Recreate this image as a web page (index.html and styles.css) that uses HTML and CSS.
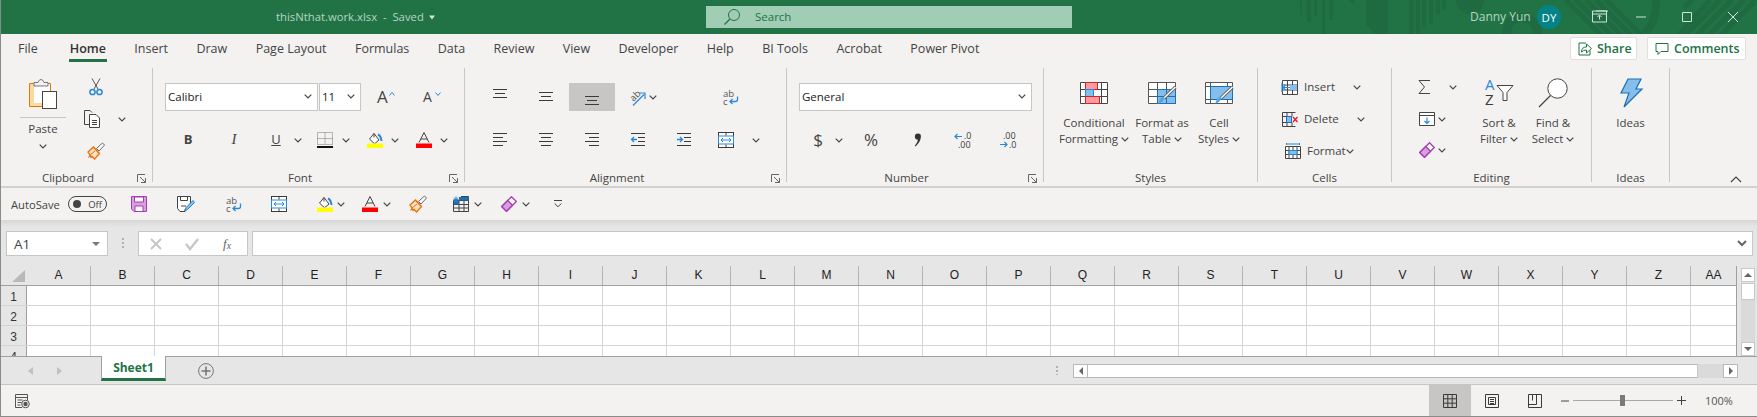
FILE: index.html
```html
<!DOCTYPE html>
<html lang="en">
<head>
<meta charset="utf-8">
<title>thisNthat.work.xlsx - Excel</title>
<link rel="stylesheet" href="styles.css">
</head>
<body>
<svg class="defs" aria-hidden="true">
  <symbol id="c" viewBox="0 0 8 5"><path d="M.7.7 4 4 7.3.7" fill="none" stroke="#444" stroke-width="1.2"/></symbol>
  <symbol id="launch" viewBox="0 0 9 9"><path d="M.5 8V.5H8M3 3l5.500 5.500M8.500 4v4.500H4" fill="none" stroke="#666"/></symbol>
  <symbol id="al-top" viewBox="0 0 16 16"><path d="M1 .5h14M3 4.500h10M1 8.500h14" stroke="#3b3a39" fill="none"/></symbol>
  <symbol id="al-mid" viewBox="0 0 16 16"><path d="M1 3.500h14M3 7.500h10M1 11.500h14" stroke="#3b3a39" fill="none"/></symbol>
  <symbol id="al-bot" viewBox="0 0 16 16"><path d="M1 7.500h14M3 11.500h10M1 15.500h14" stroke="#3b3a39" fill="none"/></symbol>
  <symbol id="al-l" viewBox="0 0 16 16"><path d="M1 1.500h14M1 5.500h10M1 9.500h14M1 13.500h10" stroke="#3b3a39" fill="none"/></symbol>
  <symbol id="al-c" viewBox="0 0 16 16"><path d="M1 1.500h14M3 5.500h10M1 9.500h14M3 13.500h10" stroke="#3b3a39" fill="none"/></symbol>
  <symbol id="al-r" viewBox="0 0 16 16"><path d="M1 1.500h14M5 5.500h10M1 9.500h14M5 13.500h10" stroke="#3b3a39" fill="none"/></symbol>
  <symbol id="outd" viewBox="0 0 16 16"><path d="M1 1.500h14M8 5.500h7M8 9.500h7M1 13.500h14" stroke="#3b3a39" fill="none"/><path d="M7 7.500H1.500M4 5 1.500 7.500 4 10" stroke="#2b88d8" stroke-width="1.300" fill="none"/></symbol>
  <symbol id="ind" viewBox="0 0 16 16"><path d="M1 1.500h14M8 5.500h7M8 9.500h7M1 13.500h14" stroke="#3b3a39" fill="none"/><path d="M1 7.500h5.500M4 5l2.500 2.500L4 10" stroke="#2b88d8" stroke-width="1.300" fill="none"/></symbol>
  <symbol id="merge" viewBox="0 0 16 16"><rect x=".5" y=".5" width="15" height="15" fill="#fff" stroke="#3b3a39"/><path d="M8 .5v3M8 12.500v3" stroke="#3b3a39"/><rect x=".5" y="4" width="15" height="8" fill="#fff" stroke="#2b88d8"/><path d="M3 8h10M5 6 3 8l2 2M11 6l2 2-2 2" stroke="#2b88d8" fill="none"/></symbol>
  <symbol id="wrap" viewBox="0 0 16 16"><text x="0" y="7.500" class="ico-t">ab</text><text x="0" y="15.500" class="ico-t">c</text><path d="M14.500 7.500v3q0 2-2 2H7M9.500 10 7 12.500 9.500 15" fill="none" stroke="#2b88d8" stroke-width="1.300"/></symbol>
  <symbol id="fill" viewBox="0 0 16 16"><path d="m7 1.500 5 6.500-4.500 3.800L2.500 7z" fill="#fff" stroke="#444"/><path d="M7 1.500v4" stroke="#444"/><path d="M11 2.500q3 1.500 3.500 6.500" fill="none" stroke="#2b88d8" stroke-width="2"/><rect y="11.500" width="16" height="4.500" fill="#ffff00"/></symbol>
  <symbol id="color" viewBox="0 0 16 16"><path d="m3 10.500 5-10 5 10M5 7h6" fill="none" stroke="#444"/><rect y="11.500" width="16" height="4.500" fill="#ff0000"/></symbol>
  <symbol id="brush" viewBox="0 0 18 18"><path d="m1 10 5.500-5 6 6.500L7.500 17 5 14.500l-1 1-.7-1.500-1 .5.700-1.500z" fill="#fce0bf" stroke="#e8700c" stroke-width="1.300"/><path d="m6 5 6 6.500M3 13l5-4" stroke="#e8700c"/><path d="m9.500 6.500 6-5.500 2 2-5.500 6z" fill="#fff" stroke="#666"/></symbol>
  <symbol id="eraser" viewBox="0 0 16 16"><path d="M10.500.7 15.300 5.500 5.500 15.300.7 10.500z" fill="#fff" stroke="#a83ab4" stroke-width="1.300"/><path d="M6.800 4.500 11.500 9.200 5.500 15.300.7 10.500z" fill="#d79fdc" stroke="#a83ab4" stroke-width="1.300"/></symbol>
</svg>

<header class="titlebar">
  <svg class="decor" width="457" height="34" viewBox="0 0 457 34" aria-hidden="true">
    <g fill="#1f6a41">
      <rect x="0" width="2" height="15"/><rect x="7" width="4" height="22"/><rect x="14" width="3" height="16"/><rect x="22" width="3" height="34"/><rect x="29" width="4" height="20"/>
      <path d="M48 0h7l-1 6zM66 0h22v34H76L66 25z"/>
      <rect x="109" width="4" height="34"/><rect x="116" width="4" height="34"/><rect x="122" width="4" height="28"/><rect x="129" width="4" height="24"/><rect x="136" width="4" height="14"/><rect x="142" width="4" height="10"/>
      <circle cx="170" cy="0" r="14"/>
    </g>
    <circle cx="222" cy="33" r="15.500" fill="none" stroke="#1f6a41" stroke-width="9"/>
    <g fill="none" stroke="#1f6a41" stroke-width="5">
      <path d="m266 0 36 36M276 0l36 36M286 0l36 36M296 0l36 36M306 0l36 36"/>
      <path d="M356 0q2 20-13 36" stroke-width="8"/>
      <path d="M392 0l-8 8M410 0l-32 36M420 0l-36 36M432 0l-36 36M444 0l-36 36M456 0l-36 36"/>
    </g>
  </svg>
  <span class="doc-title">thisNthat.work.xlsx  -  Saved</span>
  <svg class="doc-caret" width="8" height="5" viewBox="0 0 8 4"><path d="M1 0h6L4 4z" fill="#cfe3d8"/></svg>
  <div class="search">
    <svg width="18" height="18" viewBox="0 0 18 18"><circle cx="11" cy="7" r="5.500" fill="none" stroke="#217346"/><path d="M7 11 1.500 16.500" stroke="#217346" stroke-width="1.200"/></svg>
    <span class="search-text">Search</span>
  </div>
  <span class="user">Danny Yun</span>
  <span class="avatar">DY</span>
  <svg class="ml-29" width="20" height="16" viewBox="0 0 20 16"><path d="M4 .500h12M.500 3.500h14M.500.500h14v11H.500zM7.500 9V5M5.500 6.500l2-2 2 2" transform="translate(2 1.500)" fill="none" stroke="#cfe3d8"/></svg>
  <svg class="ml-26" width="10" height="2" viewBox="0 0 10 2"><path d="M0 1h10" stroke="#cfe3d8"/></svg>
  <svg class="ml-36" width="10" height="10" viewBox="0 0 10 10"><path d="M.5.500h9v9h-9z" fill="none" stroke="#cfe3d8"/></svg>
  <svg class="ml-36" width="10" height="10" viewBox="0 0 10 10"><path d="m0 0 10 10M10 0 0 10" stroke="#cfe3d8"/></svg>
</header>

<nav class="tabs">
  <span class="tab t-file">File</span>
  <span class="tab active">Home</span>
  <span class="tab">Insert</span>
  <span class="tab">Draw</span>
  <span class="tab">Page Layout</span>
  <span class="tab">Formulas</span>
  <span class="tab">Data</span>
  <span class="tab">Review</span>
  <span class="tab">View</span>
  <span class="tab">Developer</span>
  <span class="tab">Help</span>
  <span class="tab">BI Tools</span>
  <span class="tab">Acrobat</span>
  <span class="tab">Power Pivot</span>
  <button class="pill share">
    <svg width="14" height="14" viewBox="0 0 14 14"><path d="M8 1.500h-7v12h11V9" fill="none" stroke="#217346" transform="translate(0 -.500)"/><path d="M3.500 10q0-5 5-5V2l5 4.500-5 4.500V8q-3 0-5 2z" fill="#fff" stroke="#217346"/></svg>
    Share
  </button>
  <button class="pill comments">
    <svg width="14" height="14" viewBox="0 0 14 14"><path d="M1 1.500h12v8H6l-3 3v-3H1z" fill="#fff" stroke="#217346"/></svg>
    Comments
  </button>
</nav>

<section class="ribbon">
  <div class="group g-clip">
    <div class="body row-flex">
      <div class="paste">
        <svg width="28" height="30" viewBox="0 0 28 30"><path d="M.5 4.500h21v23H.5z" fill="#fff" stroke="#e3780a"/><path d="M1 5h4v22H1z" fill="#fbd9a0"/><path d="M1 24h16v3H1z" fill="#fbd9a0"/><path d="M5 7V3.500h4q1-3 3-3t3 3h4V7z" fill="#f3f2f1" stroke="#777"/><rect x="13.500" y="12.500" width="14" height="17" fill="#fff" stroke="#444"/></svg>
        <span class="paste-label">Paste</span>
        <svg class="paste-caret" width="8" height="5"><use href="#c"/></svg>
      </div>
      <div class="stack">
        <div class="srow">
          <svg class="ml-22" width="16" height="18" viewBox="0 0 16 18"><path d="M4 .5 10 11M12 .5 6 11" stroke="#555" fill="none"/><circle cx="4.500" cy="14" r="2.600" fill="none" stroke="#2b88d8" stroke-width="1.500"/><circle cx="11.500" cy="14" r="2.600" fill="none" stroke="#2b88d8" stroke-width="1.500"/></svg>
        </div>
        <div class="srow">
          <svg class="ml-18" width="18" height="18" viewBox="0 0 18 18"><path d="M7 14.500H.5v-14H6l2 2" fill="#f3f2f1" stroke="#444"/><path d="M5.500 4.500H12l3.500 3.500v9.500h-10z" fill="#fff" stroke="#444"/><path d="M8 10.500h5M8 12.500h5M8 14.500h5" stroke="#444"/></svg>
          <svg class="ml-16" width="8" height="5"><use href="#c"/></svg>
        </div>
        <div class="srow">
          <svg class="ml-21" width="18" height="18"><use href="#brush"/></svg>
        </div>
      </div>
    </div>
    <div class="label with-launch">Clipboard<svg class="launch" width="9" height="9"><use href="#launch"/></svg></div>
  </div>

  <div class="group g-font">
    <div class="body">
      <div class="r1">
        <div class="field ml-12 w-153"><span class="field-text">Calibri</span><svg width="8" height="5"><use href="#c"/></svg></div>
        <div class="field ml-1 w-42"><span class="field-text">11</span><svg width="8" height="5"><use href="#c"/></svg></div>
        <span class="grow-a ml-16">A<svg class="sup" width="6" height="4" viewBox="0 0 6 4"><path d="m.5 3.500 2.500-3 2.500 3" fill="none" stroke="#2b88d8"/></svg></span>
        <span class="shrink-a ml-32">A<svg class="sup" width="6" height="4" viewBox="0 0 6 4"><path d="m.5.500 2.500 3 2.500-3" fill="none" stroke="#2b88d8"/></svg></span>
      </div>
      <div class="r2">
        <span class="fx-b ml-29">B</span>
        <span class="fx-i ml-34">I</span>
        <span class="fx-u ml-30">U</span>
        <svg class="ml-12" width="8" height="5"><use href="#c"/></svg>
        <svg class="ml-15" width="16" height="16" viewBox="0 0 16 16"><path d="M.5.500h15v12H.5zM8 .5v12M.5 6.500h15" fill="none" stroke="#777" stroke-dasharray="1 1"/><path d="M0 15h16" stroke="#111" stroke-width="2"/></svg>
        <svg class="ml-9" width="8" height="5"><use href="#c"/></svg>
        <svg class="ml-17" width="16" height="16"><use href="#fill"/></svg>
        <svg class="ml-8" width="8" height="5"><use href="#c"/></svg>
        <svg class="ml-17" width="16" height="16"><use href="#color"/></svg>
        <svg class="ml-8" width="8" height="5"><use href="#c"/></svg>
      </div>
    </div>
    <div class="label with-launch">Font<svg class="launch" width="9" height="9"><use href="#launch"/></svg></div>
  </div>

  <div class="group g-align">
    <div class="body">
      <div class="r1">
        <svg class="ml-27" width="16" height="16"><use href="#al-top"/></svg>
        <svg class="ml-30" width="16" height="16"><use href="#al-mid"/></svg>
        <span class="hot ml-15"><svg width="16" height="16"><use href="#al-bot"/></svg></span>
        <svg class="ml-13" width="18" height="18" viewBox="0 0 18 18"><text class="ico-t" transform="translate(5.500 14) rotate(-45)">ab</text><path d="m5 17.500 11-11M11 5h6v6" fill="none" stroke="#2b88d8" stroke-width="1.200"/></svg>
        <svg class="ml-3" width="8" height="5"><use href="#c"/></svg>
        <svg class="ml-66" width="16" height="16"><use href="#wrap"/></svg>
      </div>
      <div class="r2">
        <svg class="ml-27" width="16" height="16"><use href="#al-l"/></svg>
        <svg class="ml-30" width="16" height="16"><use href="#al-c"/></svg>
        <svg class="ml-30" width="16" height="16"><use href="#al-r"/></svg>
        <svg class="ml-30" width="16" height="16"><use href="#outd"/></svg>
        <svg class="ml-30" width="16" height="16"><use href="#ind"/></svg>
        <svg class="ml-26" width="16" height="16"><use href="#merge"/></svg>
        <svg class="ml-18" width="8" height="5"><use href="#c"/></svg>
      </div>
    </div>
    <div class="label with-launch">Alignment<svg class="launch" width="9" height="9"><use href="#launch"/></svg></div>
  </div>

  <div class="group g-num">
    <div class="body">
      <div class="r1">
        <div class="field ml-12 w-233"><span class="field-text">General</span><svg width="8" height="5"><use href="#c"/></svg></div>
      </div>
      <div class="r2">
        <span class="fx-big ml-23">$</span>
        <svg class="ml-9" width="8" height="5"><use href="#c"/></svg>
        <span class="fx-big ml-20">%</span>
        <svg class="ml-30" width="16" height="16" viewBox="0 0 16 16"><path d="M9 1.500a3 3 0 0 1 2.900 3.300c-.2 4-2.300 7-5.400 9.700l-.8-.7c1.800-1.900 3-3.700 3.100-6.200a3 3 0 1 1 .2-6.100z" fill="#333"/></svg>
        <svg class="ml-28" width="20" height="18" viewBox="0 0 20 18"><path d="M9 5.500H2M4.500 3 2 5.500 4.500 8" fill="none" stroke="#2b88d8" stroke-width="1.200"/><text class="num-t" x="11" y="8">.0</text><text class="num-t" x="5" y="17">.00</text></svg>
        <svg class="ml-25" width="20" height="18" viewBox="0 0 20 18"><text class="num-t" x="5" y="8">.00</text><path d="M2 13.500h7M6.500 11 9 13.500 6.500 16" fill="none" stroke="#2b88d8" stroke-width="1.200"/><text class="num-t" x="11" y="17">.0</text></svg>
      </div>
    </div>
    <div class="label with-launch">Number<svg class="launch" width="9" height="9"><use href="#launch"/></svg></div>
  </div>

  <div class="group g-styles">
    <div class="body row-flex">
      <div class="big w-76 ml-12">
        <svg width="30" height="30" viewBox="0 0 30 30"><g transform="translate(1 4)"><path d="M.5.5h27v21H.5zM.5 7.500h27M.5 14.500h27M5.500.5v21M21.500.5v21" fill="#fff" stroke="#444"/><rect x="5.500" y=".5" width="12" height="7" fill="#ff9aa2" stroke="#d92121"/><rect x="5.500" y="7.500" width="8" height="7" fill="#83beec" stroke="#2b88d8"/><rect x="5.500" y="14.500" width="14" height="7" fill="#ff9aa2" stroke="#d92121"/></g></svg>
        <span class="big-text">Conditional<br>Formatting <svg width="8" height="5"><use href="#c"/></svg></span>
      </div>
      <div class="big w-60">
        <svg width="30" height="30" viewBox="0 0 30 30"><g transform="translate(1 4)"><path d="M.5.5h27v21H.5zM.5 7.500h27M.5 14.500h27M9.500.5v21M18.500.5v21" fill="#fff" stroke="#555"/><rect x="9.500" y="7.500" width="18" height="14" fill="#83beec" stroke="#1f6fb5"/><path d="M9.500 14.500h18M18.500 7.500v14" stroke="#1f6fb5"/></g><path d="M28.500 9 17 20" stroke="#666" stroke-width="3.200"/><path d="M28.500 9 17 20" stroke="#fff" stroke-width="1.400"/><path d="M17.500 19q-1 6-7 6.500 2-1 2-4 1-3 5-2.500z" fill="#5ba3dc"/></svg>
        <span class="big-text">Format as<br>Table <svg width="8" height="5"><use href="#c"/></svg></span>
      </div>
      <div class="big w-54">
        <svg width="30" height="30" viewBox="0 0 30 30"><g transform="translate(1 4)"><path d="M.5.5h27v21H.5zM.5 4.500h27M.5 17.500h27M5.500.5v21M22.500.5v21" fill="#fff" stroke="#555"/><rect x="5.500" y="4.500" width="22" height="13" fill="#83beec" stroke="#1f6fb5"/></g><path d="M28.500 9 17 20" stroke="#666" stroke-width="3.200"/><path d="M28.500 9 17 20" stroke="#fff" stroke-width="1.400"/><path d="M17.500 19q-1 6-7 6.500 2-1 2-4 1-3 5-2.500z" fill="#5ba3dc"/></svg>
        <span class="big-text">Cell<br>Styles <svg width="8" height="5"><use href="#c"/></svg></span>
      </div>
    </div>
    <div class="label">Styles</div>
  </div>

  <div class="group g-cells">
    <div class="body">
      <div class="stack">
        <div class="srow">
          <svg class="ml-24" width="16" height="15" viewBox="0 0 16 15"><path d="M.5.5h15v14H.5zM.5 5h15M.5 10h15M5.500.5v14M10.500.5v14" fill="#fff" stroke="#444"/><rect x="8" y="5" width="7" height="5" fill="#83beec"/><path d="M8 7.500H1M3.500 5 1 7.500 3.500 10M0 3v9" fill="none" stroke="#2b88d8" stroke-width="1.200"/></svg>
          <span class="stxt ml-6 w-49">Insert</span>
          <svg width="8" height="5"><use href="#c"/></svg>
        </div>
        <div class="srow">
          <svg class="ml-24" width="16" height="15" viewBox="0 0 16 15"><path d="M.5.5h13M.5 14.500h13M.5.5v14M5 .5v4M10 .5v4M5 10.500v4M10 10.500v4M.5 4.500h4M.5 10.500h4" fill="none" stroke="#444"/><rect x="4.500" y="4.500" width="5" height="6" fill="#83beec" stroke="#1f6fb5"/><path d="m11 5 4.500 5M15.500 5 11 10" stroke="#e81123" stroke-width="1.200"/></svg>
          <span class="stxt ml-6 w-53">Delete</span>
          <svg width="8" height="5"><use href="#c"/></svg>
        </div>
        <div class="srow">
          <svg class="ml-27" width="16" height="16" viewBox="0 0 16 16"><path d="M.5 3.500h15v12H.5zM.5 7.500h15M.5 11.500h15M4 3.500v12M8 3.500v12M12 3.500v12" fill="#fff" stroke="#444"/><rect x="4" y="7.500" width="8" height="4" fill="#83beec" stroke="#2b88d8"/><path d="M1.500 1h13M1.500 0v2M14.500 0v2" stroke="#2b88d8"/></svg>
          <span class="stxt ml-6 w-41">Format</span>
          <svg width="8" height="5"><use href="#c"/></svg>
        </div>
      </div>
    </div>
    <div class="label">Cells</div>
  </div>

  <div class="group g-edit">
    <div class="body row-flex">
      <div class="stack w-75">
        <div class="srow srow-edit1">
          <svg class="ml-26" width="12" height="14" viewBox="0 0 12 14"><path d="M12 .5H1l5.500 6.500L1 13.500h11" fill="none" stroke="#444"/></svg>
          <svg class="ml-19" width="8" height="5"><use href="#c"/></svg>
        </div>
        <div class="srow srow-edit2">
          <svg class="ml-27" width="16" height="14" viewBox="0 0 16 14"><path d="M.5.5h15v13H.5zM.5 3.500h15" fill="#fff" stroke="#444"/><path d="M8 5.500v6M5.500 9 8 11.500 10.500 9" fill="none" stroke="#2b88d8" stroke-width="1.200"/></svg>
          <svg class="ml-3" width="8" height="5"><use href="#c"/></svg>
        </div>
        <div class="srow srow-edit3">
          <svg class="ml-27" width="16" height="16"><use href="#eraser"/></svg>
          <svg class="ml-3" width="8" height="5"><use href="#c"/></svg>
        </div>
      </div>
      <div class="big w-64">
        <svg width="30" height="30" viewBox="0 0 30 30"><text class="az blue" x="1" y="12">A</text><text class="az" x="1" y="27">Z</text><path d="M13 7.500h16l-6 7v8h-4v-8z" fill="#fff" stroke="#444"/></svg>
        <span class="big-text">Sort &amp;<br>Filter <svg width="8" height="5"><use href="#c"/></svg></span>
      </div>
      <div class="big w-44">
        <svg width="30" height="30" viewBox="0 0 30 30"><circle cx="19.500" cy="10.500" r="9.700" fill="#fff" stroke="#444"/><path d="M12.500 17.500 1 29" stroke="#444" stroke-width="1.200"/></svg>
        <span class="big-text">Find &amp;<br>Select <svg width="8" height="5"><use href="#c"/></svg></span>
      </div>
    </div>
    <div class="label">Editing</div>
  </div>

  <div class="group g-ideas">
    <div class="body row-flex">
      <div class="big w-77">
        <svg width="24" height="30" viewBox="0 0 24 30"><path d="M9 1h13l-5 10h6L5 29l5-14H2z" fill="#83beec" stroke="#1f6fb5" stroke-width="1.200"/></svg>
        <span class="big-text">Ideas</span>
      </div>
    </div>
    <div class="label">Ideas</div>
  </div>

  <div class="collapse-wrap">
    <svg width="12" height="7" viewBox="0 0 12 7"><path d="m1 6 5-5 5 5" fill="none" stroke="#444" stroke-width="1.200"/></svg>
  </div>
</section>
<div class="ribbon-rule"></div>

<section class="qat">
  <span class="autosave">AutoSave</span>
  <span class="toggle"><i class="knob"></i><b>Off</b></span>
  <svg class="ml-24" width="16" height="16" viewBox="0 0 16 16"><path d="M.5.5h15v15H3L.5 13z" fill="#d79fdc" stroke="#a83ab4"/><path d="M3.500 1h9v5h-9zM4 10h8v5.500H4z" fill="#fff" stroke="#a83ab4"/></svg>
  <svg class="ml-30" width="18" height="18" viewBox="0 0 18 18"><path d="M.5 1.500h13v7L8 14.500v2H3l-2.500-3z" fill="#fff" stroke="#444"/><path d="M3.500 1.500h7v4h-7zM4 11h5" fill="none" stroke="#444"/><path d="m8 16 1-3.500 7-7L17.500 7.500l-7 7z" fill="#83beec" stroke="#2b88d8"/></svg>
  <svg class="ml-31" width="16" height="16"><use href="#wrap"/></svg>
  <svg class="ml-29" width="16" height="16"><use href="#merge"/></svg>
  <svg class="ml-30" width="16" height="16"><use href="#fill"/></svg>
  <svg class="ml-4" width="8" height="5"><use href="#c"/></svg>
  <svg class="ml-17" width="16" height="16"><use href="#color"/></svg>
  <svg class="ml-5" width="8" height="5"><use href="#c"/></svg>
  <svg class="ml-18" width="18" height="18"><use href="#brush"/></svg>
  <svg class="ml-26" width="16" height="16" viewBox="0 0 16 16"><path d="M.5 4.500h15v11H.5zM8 .5h7.500v15M.5 8.500h15M.5 12h15M6 4.500v11M11 .5v15" fill="none" stroke="#444"/><path d="M6 1h9.500v3.500H6zM1 4.500h5v4H1z" fill="#1f6fb5"/><path d="M3 .5v6M.5 3.500h5M1 1.500l4 4M5 1.500l-4 4" stroke="#2b88d8"/></svg>
  <svg class="ml-5" width="8" height="5"><use href="#c"/></svg>
  <svg class="ml-19" width="16" height="16"><use href="#eraser"/></svg>
  <svg class="ml-5" width="8" height="5"><use href="#c"/></svg>
  <svg class="ml-24" width="8" height="8" viewBox="0 0 8 8"><path d="M0 .5h8M.7 3.500 4 6.800l3.300-3.300" fill="none" stroke="#444"/></svg>
</section>

<section class="formula">
  <div class="name-box"><span>A1</span><i class="tri"></i></div>
  <i class="dots"></i>
  <div class="fx-box">
    <svg width="14" height="14" viewBox="0 0 14 14"><path d="m2 2 10 10M12 2 2 12" stroke="#c8c6c4" stroke-width="2"/></svg>
    <svg width="14" height="14" viewBox="0 0 14 14"><path d="m1 7 4 5 8-10" fill="none" stroke="#c8c6c4" stroke-width="2.400"/></svg>
    <span class="fx-label">f<sub>x</sub></span>
  </div>
  <div class="fx-input"><svg width="10" height="7" viewBox="0 0 10 7"><path d="m1 1 4 4 4-4" fill="none" stroke="#666" stroke-width="2"/></svg></div>
</section>

<section class="sheet">
  <div class="grid">
    <div class="heads">
      <span class="corner"><i></i></span>
      <span class="ch">A</span><span class="ch">B</span><span class="ch">C</span><span class="ch">D</span><span class="ch">E</span><span class="ch">F</span><span class="ch">G</span><span class="ch">H</span><span class="ch">I</span><span class="ch">J</span><span class="ch">K</span><span class="ch">L</span><span class="ch">M</span><span class="ch">N</span><span class="ch">O</span><span class="ch">P</span><span class="ch">Q</span><span class="ch">R</span><span class="ch">S</span><span class="ch">T</span><span class="ch">U</span><span class="ch">V</span><span class="ch">W</span><span class="ch">X</span><span class="ch">Y</span><span class="ch">Z</span><span class="ch ch-last">AA</span>
    </div>
    <div class="row"><span class="rh">1</span><span class="cells"></span></div>
    <div class="row"><span class="rh">2</span><span class="cells"></span></div>
    <div class="row"><span class="rh">3</span><span class="cells"></span></div>
    <div class="row"><span class="rh">4</span><span class="cells"></span></div>
  </div>
  <div class="vscroll">
    <span class="sb-btn"><i class="tri-up"></i></span>
    <span class="v-thumb"></span>
    <span class="v-track"></span>
    <span class="sb-btn"><i class="tri-down"></i></span>
  </div>
</section>

<section class="sheetbar">
  <i class="nav-l"></i>
  <i class="nav-r"></i>
  <span class="sheet-tab">Sheet1</span>
  <svg class="ml-32" width="16" height="16" viewBox="0 0 16 16"><circle cx="8" cy="8" r="7.400" fill="none" stroke="#777"/><path d="M8 3.500v9M3.500 8h9" stroke="#777" stroke-width="1.600"/></svg>
  <i class="dots dots-sm"></i>
  <div class="hscroll">
    <span class="h-btn"><i class="tri-left"></i></span>
    <span class="h-thumb"></span>
    <span class="h-track"></span>
    <span class="h-btn"><i class="tri-right"></i></span>
  </div>
</section>

<footer class="status">
  <svg class="ml-14" width="15" height="14" viewBox="0 0 15 14"><path d="M7 13.500H.5V.5h12v6M.5 3.500h12M2.500 6h5M2.500 8.500h4M2.500 11h3" fill="none" stroke="#555"/><circle cx="10.500" cy="10" r="3.800" fill="none" stroke="#555"/><circle cx="10.500" cy="10" r="2.200" fill="#555"/></svg>
  <span class="view-on"><svg width="14" height="14" viewBox="0 0 14 14"><path d="M.5.5h13v13H.5zM.5 4.800h13M.5 9.200h13M4.800.5v13M9.200.5v13" fill="none" stroke="#3b3a39"/></svg></span>
  <svg class="ml-14" width="14" height="14" viewBox="0 0 14 14"><path d="M.5.5h13v13H.5z" fill="none" stroke="#3b3a39"/><path d="M3.500 3.500h7v7h-7zM5 5.500h4M5 7.500h4M5 9.500h4" fill="none" stroke="#3b3a39"/></svg>
  <svg class="ml-29" width="14" height="14" viewBox="0 0 14 14"><path d="M.5.500h13v13H.5zM.5 10.500h8V.5" fill="none" stroke="#3b3a39"/><path d="M4.500.5v6" stroke="#3b3a39"/></svg>
  <svg class="ml-19" width="8" height="8" viewBox="0 0 8 8"><path d="M0 4h8" stroke="#444"/></svg>
  <span class="slider"><i class="slider-thumb"></i></span>
  <svg class="ml-4" width="9" height="9" viewBox="0 0 9 9"><path d="M0 4.500h9M4.500 0v9" stroke="#444"/></svg>
  <span class="zoom">100%</span>
</footer>
</body>
</html>
```

FILE: styles.css
```css
* { box-sizing: border-box; }
html, body { margin: 0; padding: 0; }
body {
  width: 1757px;
  height: 417px;
  overflow: hidden;
  border-left: 1px solid #8a8a8a;
  border-bottom: 1px solid #8a8a8a;
  background: #f3f2f1;
  color: #3b3a39;
  font-family: "Open Sans", "Noto Sans", "Liberation Sans", sans-serif;
  font-size: 11.5px;
}
svg { display: block; flex: none; overflow: visible; }
i { display: block; }
.defs { position: absolute; width: 0; height: 0; }
.ico-t { font: 9.500px "Open Sans", sans-serif; fill: #555; }
.num-t { font: 9px "Open Sans", sans-serif; fill: #3b3a39; }
.az { font: 15px "Open Sans", sans-serif; fill: #3b3a39; }
.az.blue { fill: #2b88d8; }

.ml-1 { margin-left: 1px; } .ml-3 { margin-left: 3px; } .ml-4 { margin-left: 4px; } .ml-5 { margin-left: 5px; }
.ml-6 { margin-left: 6px; } .ml-8 { margin-left: 8px; } .ml-9 { margin-left: 9px; } .ml-12 { margin-left: 12px; }
.ml-13 { margin-left: 13px; } .ml-14 { margin-left: 14px; } .ml-15 { margin-left: 15px; } .ml-16 { margin-left: 16px; }
.ml-17 { margin-left: 17px; } .ml-18 { margin-left: 18px; } .ml-19 { margin-left: 19px; } .ml-20 { margin-left: 20px; }
.ml-21 { margin-left: 21px; } .ml-22 { margin-left: 22px; } .ml-23 { margin-left: 23px; } .ml-24 { margin-left: 24px; }
.ml-25 { margin-left: 25px; } .ml-26 { margin-left: 26px; } .ml-27 { margin-left: 27px; } .ml-28 { margin-left: 28px; }
.ml-29 { margin-left: 29px; } .ml-30 { margin-left: 30px; } .ml-31 { margin-left: 31px; } .ml-32 { margin-left: 32px; }
.ml-34 { margin-left: 34px; } .ml-36 { margin-left: 36px; } .ml-66 { margin-left: 66px; }
.w-41 { width: 39px; } .w-42 { width: 42px; } .w-44 { width: 44px; } .w-49 { width: 49px; } .w-53 { width: 53px; }
.w-54 { width: 54px; } .w-60 { width: 60px; } .w-64 { width: 64px; } .w-75 { width: 75px; } .w-76 { width: 76px; }
.w-77 { width: 77px; } .w-153 { width: 153px; } .w-233 { width: 233px; }

/* title bar */
.titlebar {
  position: relative;
  height: 34px;
  background: #217346;
  display: flex;
  align-items: center;
  color: #bcdcc9;
  overflow: hidden;
}
.decor { position: absolute; left: 1299px; top: 0; }
.doc-title { position: relative; margin: -2px 0 0 275px; width: 149px; white-space: pre; font-size: 11.3px; color: #b4d6c2; }
.doc-caret { position: relative; margin-left: 3px; }
.search {
  position: relative;
  margin-left: 270px;
  width: 366px;
  height: 22px;
  background: #a0cdb4;
  color: #217346;
  display: flex;
  align-items: center;
  gap: 14px;
  padding-left: 17px;
  font-size: 11.5px;
}
.search-text { margin-top: -2px; }
.user { position: relative; margin: -2px 0 0 398px; width: 59px; color: #b4d6c2; font-size: 12px; white-space: nowrap; }
.avatar {
  position: relative;
  margin-left: 8px;
  width: 24px;
  height: 24px;
  border-radius: 50%;
  background: #038387;
  color: #fff;
  font-size: 11.5px;
  display: flex;
  align-items: center;
  justify-content: center;
}
.titlebar > svg:not(.decor) { position: relative; }

/* tabs */
.tabs { height: 34px; display: flex; align-items: center; position: relative; padding-left: 17px; }
.tab { font-size: 12.5px; margin-right: 28.4px; height: 34px; line-height: 30px; white-space: nowrap; color: #444; }
.t-file { margin-right: 32px; }
.tab.active { position: relative; color: #323130; font-weight: 600; }
.tab.active::after { content: ""; position: absolute; left: -1px; right: -1px; top: 25px; height: 3px; background: #217346; }
.pill {
  height: 23px;
  background: #fff;
  border: 1px solid #e1dfdd;
  border-radius: 2px;
  color: #217346;
  font: 600 12.500px "Open Sans", sans-serif;
  display: flex;
  align-items: center;
  gap: 5px;
  padding: 0 0 0 7px;
  margin-top: -5px;
}
.share { margin-left: auto; width: 67px; }
.comments { margin-left: 10px; margin-right: 11px; width: 99px; }

/* ribbon */
.ribbon { display: flex; height: 118px; }
.group { position: relative; height: 114px; display: flex; flex-direction: column; border-right: 1px solid #c8c6c4; flex: none; }
.g-clip { width: 152px; }
.g-font { width: 312px; }
.g-align { width: 322px; }
.g-num { width: 257px; }
.g-styles { width: 214px; }
.g-cells { width: 134px; }
.g-edit { width: 200px; }
.g-ideas { width: 78px; }
.body { flex: 1; min-height: 0; }
.row-flex { display: flex; }
.label {
  position: relative;
  height: 16px;
  line-height: 16px;
  margin-bottom: -4px;
  text-align: center;
  color: #444;
  font-size: 11.5px;
}
.with-launch { padding-right: 17px; }
.launch { position: absolute; right: 6px; top: 4px; }
.collapse-wrap { flex: 1; display: flex; justify-content: flex-end; padding: 108px 15px 0 0; }

.r1 { display: flex; align-items: center; height: 28px; margin-top: 15px; }
.r2 { display: flex; align-items: center; height: 28px; margin-top: 15px; }
.field {
  height: 28px;
  background: #fff;
  border: 1px solid #c8c6c4;
  display: flex;
  align-items: center;
  justify-content: space-between;
  padding: 0 5px 2px 2px;
  font-size: 11.5px;
  flex: none;
}
.field-text { color: #222; }
.hot { width: 46px; height: 28px; background: #c8c6c4; display: flex; align-items: center; justify-content: center; flex: none; }
.grow-a, .shrink-a { position: relative; width: 14px; line-height: 28px; font-size: 17px; color: #444; flex: none; }
.shrink-a { font-size: 14px; }
.sup { position: absolute; left: 12px; top: 9px; }
.fx-b, .fx-i, .fx-u { width: 12px; text-align: center; font-size: 13px; color: #444; flex: none; margin-top: -2px; }
.fx-b { font-weight: 700; }
.fx-i { font-family: "Liberation Serif", serif; font-style: italic; font-size: 15px; }
.fx-u { text-decoration: underline; }
.fx-big { width: 16px; text-align: center; font-size: 17px; color: #444; flex: none; margin-top: -2px; }

.paste { margin-left: 19px; width: 46px; height: 92px; display: flex; flex-direction: column; align-items: center; padding-top: 11px; flex: none; }
.paste-label { width: 100%; margin-top: 8px; padding-top: 3px; border-top: 1px solid #c8c6c4; text-align: center; font-size: 11.5px; line-height: 16px; color: #444; }
.paste-caret { margin-top: 7px; }

.stack { padding-top: 3px; flex: none; }
.srow { height: 32px; display: flex; align-items: center; }
.stxt { font-size: 11.5px; color: #444; flex: none; margin-top: -2px; }
.srow-edit1 { height: 30px; margin-top: 1px; }
.srow-edit2 { height: 32px; margin-top: 1px; }
.srow-edit3 { height: 30px; }

.big { display: flex; flex-direction: column; align-items: center; padding-top: 10px; flex: none; }
.big-text { margin-top: 7px; text-align: center; font-size: 11.5px; line-height: 16px; color: #444; white-space: nowrap; }
.big-text svg { display: inline-block; vertical-align: 1px; }

.ribbon-rule { height: 2px; background: #d2d0ce; }

/* quick access */
.qat { height: 32px; display: flex; align-items: center; padding-left: 10px; }
.autosave { width: 50px; font-size: 11.2px; white-space: nowrap; color: #444; flex: none; }
.toggle {
  margin-left: 7px;
  width: 39px;
  height: 16px;
  border: 1px solid #444;
  border-radius: 8px;
  display: flex;
  align-items: center;
  padding: 0 4px;
  justify-content: space-between;
  flex: none;
}
.knob { width: 8px; height: 8px; border-radius: 50%; background: #444; }
.toggle b { font-weight: 400; font-size: 9.500px; color: #444; }

/* formula bar */
.formula {
  height: 46px;
  background: linear-gradient(#d6d6d6, #e6e6e6 7px);
  display: flex;
  align-items: flex-start;
  padding: 11px 4px 0 5px;
}
.name-box, .fx-box, .fx-input { height: 25px; background: #fff; border: 1px solid #c6c6c6; display: flex; align-items: center; flex: none; }
.name-box { width: 102px; padding: 0 7px; justify-content: space-between; font-size: 13.5px; color: #444; }
.tri { width: 0; height: 0; border: 4px solid transparent; border-top: 4px solid #777; border-bottom: 0; }
.dots { width: 2px; height: 10px; margin: 7px 14px 0 14px; background: repeating-linear-gradient(#b0b0b0 0 2px, transparent 2px 4px); flex: none; }
.fx-box { width: 110px; padding-left: 10px; gap: 22px; }
.fx-label { font: italic 13px "Liberation Serif", serif; color: #666; margin-left: 2px; }
.fx-label sub { font-size: 10px; vertical-align: -1px; }
.fx-input { margin-left: 4px; flex: 1; justify-content: flex-end; padding-right: 5px; }

/* sheet */
.sheet { height: 90px; display: flex; background: #e6e6e6; }
.grid { width: 1736px; height: 90px; overflow: hidden; border-right: 1px solid #a0a0a0; background: #fff; }
.heads { display: flex; height: 20px; background: #e6e6e6; border-bottom: 1px solid #a0a0a0; }
.corner { width: 26px; border-right: 1px solid #e6e6e6; position: relative; flex: none; }
.corner i { position: absolute; left: 11px; top: 4px; width: 0; height: 0; border-left: 13px solid transparent; border-bottom: 12px solid #b9b9b9; }
.ch { width: 64px; flex: none; border-right: 1px solid #b4b4b4; text-align: center; font: 12px/19px "Liberation Sans", sans-serif; color: #222; }
.ch-last { width: 45px; border-right: 0; }
.row { display: flex; height: 20px; border-bottom: 1px solid #d4d4d4; }
.rh { width: 26px; flex: none; background: #e6e6e6; border-right: 1px solid #a0a0a0; text-align: center; font: 12px/22px "Liberation Sans", sans-serif; color: #333; }
.cells { flex: 1; background: repeating-linear-gradient(to right, #fff 0 63px, #d4d4d4 63px 64px); }

.vscroll { width: 20px; padding: 2px 2px 0 4px; display: flex; flex-direction: column; flex: none; }
.sb-btn { height: 14px; background: #fff; border: 1px solid #c8c8c8; display: flex; align-items: center; justify-content: center; flex: none; }
.v-thumb { height: 17px; margin-top: 1px; background: #fff; border: 1px solid #c8c8c8; flex: none; }
.v-track { flex: 1; background: #dadada; }
.tri-up { width: 0; height: 0; border: 4px solid transparent; border-bottom: 4px solid #666; border-top: 0; }
.tri-down { width: 0; height: 0; border: 4px solid transparent; border-top: 4px solid #666; border-bottom: 0; }
.tri-left { width: 0; height: 0; border: 4px solid transparent; border-right: 4px solid #666; border-left: 0; }
.tri-right { width: 0; height: 0; border: 4px solid transparent; border-left: 4px solid #666; border-right: 0; }

/* sheet tabs */
.sheetbar { height: 28px; background: #e6e6e6; border-top: 1px solid #a0a0a0; display: flex; align-items: center; position: relative; }
.nav-l { margin-left: 27px; width: 0; height: 0; border: 4px solid transparent; border-right: 5px solid #c0c0c0; border-left: 0; }
.nav-r { margin-left: 24px; width: 0; height: 0; border: 4px solid transparent; border-left: 5px solid #c0c0c0; border-right: 0; }
.sheet-tab {
  margin-left: 39px;
  align-self: flex-start;
  margin-top: -1px;
  width: 65px;
  height: 25px;
  background: #fff;
  border-left: 1px solid #a0a0a0;
  border-right: 1px solid #a0a0a0;
  border-bottom: 3px solid #217346;
  color: #217346;
  font-weight: 700;
  font-size: 12px;
  text-align: center;
  line-height: 23px;
}
.dots-sm { margin: 0 0 0 842px; height: 9px; }
.hscroll { margin-left: 15px; width: 665px; height: 14px; display: flex; flex: none; }
.h-btn { width: 15px; background: #fff; border: 1px solid #b8b8b8; display: flex; align-items: center; justify-content: center; flex: none; }
.h-thumb { width: 610px; background: #fff; border-top: 1px solid #b8b8b8; border-bottom: 1px solid #b8b8b8; border-right: 1px solid #c8c8c8; flex: none; }
.h-track { flex: 1; background: #dadada; }

/* status */
.status { height: 32px; border-top: 1px solid #c6c6c6; display: flex; align-items: center; }
.view-on { margin-left: 1399px; width: 42px; height: 31px; background: #c8c6c4; display: flex; align-items: center; justify-content: center; flex: none; }
.slider { margin-left: 4px; width: 100px; height: 1px; background: #a8a8a8; position: relative; flex: none; }
.slider-thumb { position: absolute; left: 47px; top: -5px; width: 5px; height: 11px; background: #7a7a7a; }
.zoom { margin-left: 19px; font-size: 11px; color: #555; }
```
